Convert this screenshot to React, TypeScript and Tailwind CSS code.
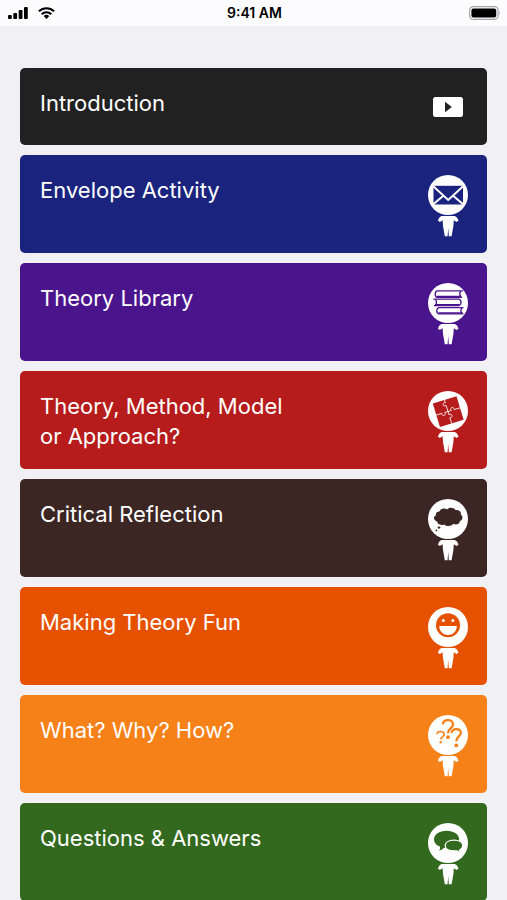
import React from "react";

interface Section {
  title: string;
  color: string;
  icon: React.ReactNode;
}

// White figure with a round head, the head's picture is passed as children
function Figure({ children }: { children: React.ReactNode }) {
  return (
    <svg viewBox="0 0 40 62" className="w-10 shrink-0" aria-hidden="true">
      <circle cx="20" cy="20" r="20" fill="white" />
      {children}
      <path
        d="M13.4 41 H26.8 Q28.8 41.4 30.6 45.4 L28.6 47 L25.8 45.2 L25.4 51 L23.6 61.2 H20.8 L20.2 53 L19.6 61.2 H16.8 L15 51 L14.6 45.2 L11.8 47 L9.8 45.4 Q11.6 41.4 13.4 41 Z"
        fill="white"
      />
    </svg>
  );
}

function EnvelopeIcon() {
  return (
    <Figure>
      <rect x="5.5" y="10.8" width="29.5" height="18.7" fill="currentColor" />
      <g fill="none" stroke="white" strokeWidth="2">
        <path d="M5 11 L20.2 25 L35.4 11" />
        <path d="M5 29.6 L15.6 20.6 M35.4 29.6 L24.8 20.6" />
      </g>
    </Figure>
  );
}

function BooksIcon() {
  return (
    <Figure>
      <g fill="none" stroke="currentColor" strokeWidth="1.3">
        <path d="M35 7.8 H9.5 Q7.2 8 7.2 11 Q7.2 14.2 9.5 14.4 H34" />
        <path d="M32.6 8 Q30.8 11 33 14" />
        <path d="M5.4 16.2 H30.5 Q33 16.6 33 19.3 Q33 22.3 30.5 22.6 H6" />
        <path d="M7.4 16.4 Q9.6 19.3 7.4 22.4" />
        <path d="M35.4 24.6 H11 Q8.8 25 8.8 27.7 Q8.8 30.5 11 30.8 H35.4" />
        <path d="M34 24.8 Q31.8 27.6 34 30.6" />
      </g>
      <path
        d="M9 13.5 H33 M7 21.9 H31.4 M10.4 30 H34.6"
        stroke="currentColor"
        strokeWidth="1.6"
      />
    </Figure>
  );
}

function PuzzleIcon() {
  return (
    <Figure>
      <g transform="rotate(-17 20 20.5)">
        <rect x="7.8" y="8.3" width="24.8" height="24.6" fill="currentColor" />
        <path
          d="M20 8 V11.4 C16.8 9.8 16 15 20 14.2 V20.5 H23.4 C22 17 27.6 17 26.4 20.5 H33 M20 20.5 H16.6 C18 24 12.4 24 13.6 20.5 H7.5 M20 20.5 V24 C23.6 22.8 23.6 28 20 27 V33"
          fill="none"
          stroke="white"
          strokeOpacity="0.85"
          strokeWidth="0.9"
        />
      </g>
    </Figure>
  );
}

function ThoughtIcon() {
  return (
    <Figure>
      <path
        d="M11.5 12.5 C12 9.5 17 8.4 19 10.4 C21 8 26 8.4 27.4 11 C31 10.4 33.6 13 32.8 15.6 C35.4 17.4 34.8 21.2 32 22 C31.6 25.4 27.4 26.4 25.4 24.8 C23.6 27.6 18 27.8 16.4 25.4 C13 26.8 9 25.4 9.2 22.4 C5.6 21.8 4.8 17.6 8 16.2 C7.4 13.8 9.4 12.2 11.5 12.5 Z"
        fill="currentColor"
      />
      <ellipse cx="11" cy="28.6" rx="1.5" ry="1.1" fill="currentColor" />
      <circle cx="8.4" cy="31.4" r="0.9" fill="currentColor" />
    </Figure>
  );
}

function SmileIcon() {
  return (
    <Figure>
      <circle cx="20" cy="18.3" r="12" fill="currentColor" />
      <circle cx="15.3" cy="13.6" r="1.5" fill="white" />
      <circle cx="24.9" cy="13.6" r="1.5" fill="white" />
      <path d="M11.2 19 H28.9 C28.6 24.6 25 28 20 28 C15 28 11.5 24.6 11.2 19 Z" fill="white" />
    </Figure>
  );
}

function QuestionsIcon() {
  return (
    <Figure>
      <g fill="none" stroke="currentColor">
        <path d="M14.8 9.4 C15.4 3.8 24.8 3.6 25 9.4 C25 13.2 20 13.4 20 18.2" strokeWidth="2.3" />
        <path d="M23.6 17.8 C24.2 13 32.6 12.8 32.8 18 C32.8 21.4 28.3 21.6 28.3 26.2" strokeWidth="2.3" />
        <path d="M9 19.2 C9.4 15.6 16 15.6 16.2 19.4 C16.2 21.8 12.7 21.8 12.7 24.4" strokeWidth="1.6" />
      </g>
      <g fill="currentColor">
        <circle cx="20" cy="22.2" r="1.9" />
        <circle cx="28.3" cy="30.4" r="1.9" />
        <circle cx="12.7" cy="27.2" r="1.2" />
      </g>
    </Figure>
  );
}

function ChatIcon() {
  return (
    <Figure>
      <path
        d="M18.5 7.7 C25.8 7.7 31.2 11.4 31.2 16.4 C31.2 21.4 25.8 25 18.5 25 L16 24.8 Q14 27.2 10.8 27.6 Q12.6 25.6 12 23.6 C8.2 22.2 6 19.6 6 16.4 C6 11.4 11.2 7.7 18.5 7.7 Z"
        fill="currentColor"
      />
      <path
        d="M26 17.2 C31.2 17.2 34.8 19.4 34.8 22.6 C34.8 24.6 33.6 26.2 31.6 27.1 Q31.8 28.6 33 29.6 Q30.2 29.4 28.8 27.8 L26 28 C20.8 28 17.2 25.8 17.2 22.6 C17.2 19.4 20.8 17.2 26 17.2 Z"
        fill="currentColor"
        stroke="white"
        strokeWidth="1.3"
      />
    </Figure>
  );
}

function VideoIcon() {
  return (
    <svg viewBox="0 0 40 20" className="w-10 shrink-0 self-center" aria-hidden="true">
      <rect x="5" width="30" height="20" rx="2.5" fill="white" />
      <path d="M17 4.8 L23.8 10 L17 15.2 Z" fill="currentColor" />
    </svg>
  );
}

const sections: Section[] = [
  { title: "Introduction", color: "bg-[#212121] text-[#212121] min-h-[77px]", icon: <VideoIcon /> },
  { title: "Envelope Activity", color: "bg-[#1a237e] text-[#1a237e] min-h-[98px]", icon: <EnvelopeIcon /> },
  { title: "Theory Library", color: "bg-[#4a148c] text-[#4a148c] min-h-[98px]", icon: <BooksIcon /> },
  { title: "Theory, Method, Model or Approach?", color: "bg-[#b71c1c] text-[#b71c1c] min-h-[98px]", icon: <PuzzleIcon /> },
  { title: "Critical Reflection", color: "bg-[#3c2624] text-[#3c2624] min-h-[98px]", icon: <ThoughtIcon /> },
  { title: "Making Theory Fun", color: "bg-[#e65100] text-[#e65100] min-h-[98px]", icon: <SmileIcon /> },
  { title: "What? Why? How?", color: "bg-[#f68119] text-[#f68119] min-h-[98px]", icon: <QuestionsIcon /> },
  { title: "Questions & Answers", color: "bg-[#33691e] text-[#33691e] min-h-[98px]", icon: <ChatIcon /> },
];

function StatusBar() {
  return (
    <header className="grid h-[26px] grid-cols-3 items-center bg-[#fcfcfe] pr-1.5 pl-2 text-black">
      <div className="flex items-center gap-2.5">
        <svg viewBox="0 0 20 12" className="w-5" fill="currentColor" aria-label="Signal">
          <rect x="0" y="8" width="3.8" height="4" rx="1" />
          <rect x="5.3" y="6" width="3.8" height="6" rx="1" />
          <rect x="10.7" y="3" width="3.8" height="9" rx="1" />
          <rect x="16" y="0" width="3.8" height="12" rx="1" />
        </svg>
        <svg viewBox="0 0 17 12" className="w-[17px]" aria-label="Wi-Fi">
          <g fill="none" stroke="currentColor" strokeWidth="2.1">
            <path d="M0.9 4.3 A11 11 0 0 1 16.1 4.3" />
            <path d="M3.7 7.2 A7 7 0 0 1 13.3 7.2" />
          </g>
          <path d="M8.5 12 L5.7 9.1 A4 4 0 0 1 11.3 9.1 Z" fill="currentColor" />
        </svg>
      </div>
      <time className="text-center text-sm font-semibold">9:41 AM</time>
      <svg viewBox="0 0 32 14" className="w-8 justify-self-end" aria-label="Battery">
        <rect x="0.6" y="0.6" width="28.4" height="12.8" rx="3.6" fill="none" stroke="#a5a5a7" strokeWidth="1.2" />
        <rect x="2.4" y="2.4" width="24.8" height="9.2" rx="2" fill="currentColor" />
        <path d="M30.4 4.8 Q32 7 30.4 9.2 Z" fill="#a5a5a7" />
      </svg>
    </header>
  );
}

export default function App() {
  return (
    <div className="min-h-screen bg-[#f0f0f5] font-['Inter',sans-serif]">
      <StatusBar />
      <nav className="flex flex-col gap-2.5 px-5 pt-[42px]">
        {sections.map((section) => (
          <button
            key={section.title}
            type="button"
            className={`flex items-start justify-between rounded-[5px] pt-5 pr-[19px] pl-5 text-left ${section.color} ${
              section.title === "Introduction" ? "pb-5" : "pb-4"
            }`}
          >
            <span className="max-w-[260px] text-[22px] leading-[30px] text-white">{section.title}</span>
            {section.icon}
          </button>
        ))}
      </nav>
    </div>
  );
}
